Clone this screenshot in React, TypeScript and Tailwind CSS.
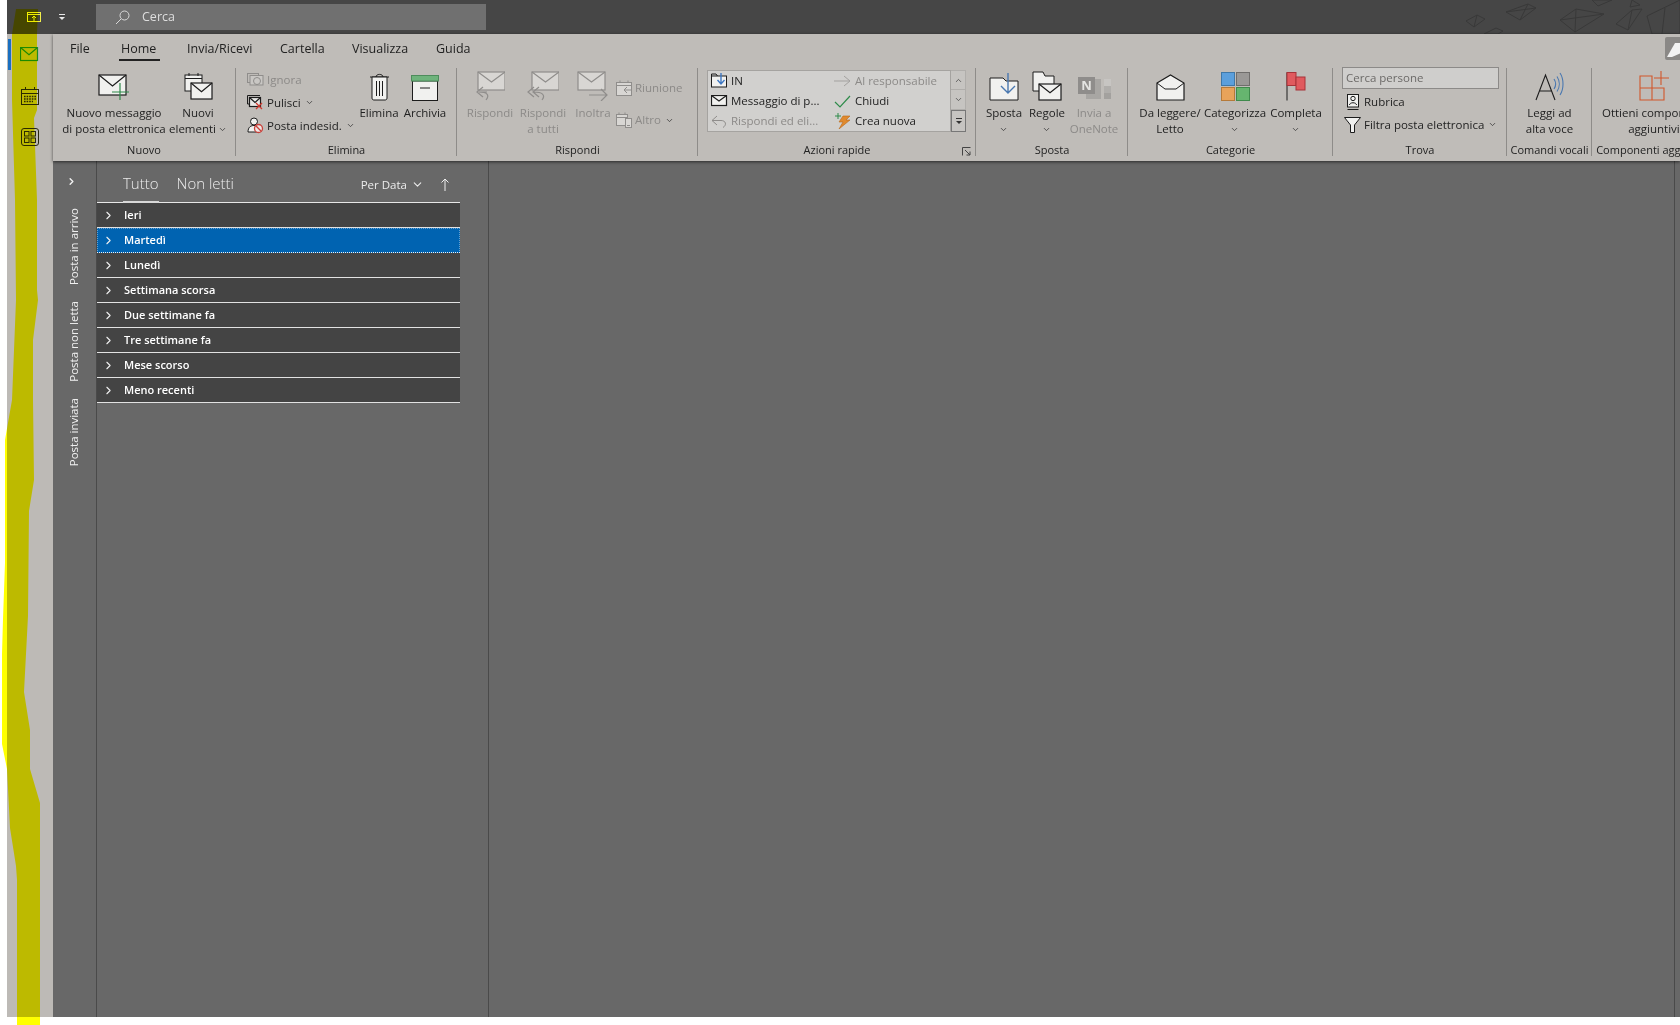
import type { ReactNode } from "react";
import { ChevronDown, ChevronRight, ChevronUp } from "lucide-react";

const INK = "#1c1c1c";
const OFF = "#8f8d8b";
const PAPER = "#f1f1ef";

function Env({ x, y, w, h, stroke = INK, fill = PAPER, sw = 1.2 }: { x: number; y: number; w: number; h: number; stroke?: string; fill?: string; sw?: number }) {
  return (
    <g fill={fill} stroke={stroke} strokeWidth={sw}>
      <rect x={x} y={y} width={w} height={h} />
      <path d={`M${x} ${y}L${x + w / 2} ${y + h * 0.55}L${x + w} ${y}`} fill="none" />
    </g>
  );
}

function Ico({ w, h, children, className = "" }: { w: number; h: number; children: ReactNode; className?: string }) {
  return (
    <svg width={w} height={h} viewBox={`0 0 ${w} ${h}`} className={`shrink-0 ${className}`}>
      {children}
    </svg>
  );
}

function Caret({ off = false }: { off?: boolean }) {
  return <ChevronDown size={9} strokeWidth={2} className="inline-block" color={off ? OFF : "#333"} />;
}

function Big({ w, icon, lines, caret, off, caretBelow }: { w: string; icon: ReactNode; lines: string[]; caret?: boolean; off?: boolean; caretBelow?: boolean }) {
  return (
    <div className={`flex shrink-0 flex-col items-center ${w}`}>
      <div className="flex h-[37px] items-end justify-center pb-[4px]">{icon}</div>
      <div className={`text-center leading-[16px] whitespace-nowrap ${off ? "text-[#8c8a88]" : "text-[#222]"}`}>
        {lines.map((l, i) => (
          <div key={i}>
            {l}
            {caret && i === lines.length - 1 && <span className="ml-[2px]"><Caret /></span>}
          </div>
        ))}
        {caretBelow && <div className="flex h-[16px] items-center justify-center"><Caret /></div>}
      </div>
    </div>
  );
}

function Small({ icon, label, caret, off, h = "h-[23px]", iw = "w-[20px]" }: { icon: ReactNode; label: string; caret?: boolean; off?: boolean; h?: string; iw?: string }) {
  return (
    <div className={`flex items-center whitespace-nowrap ${h} ${off ? "text-[#8c8a88]" : "text-[#222]"}`}>
      <div className={`flex shrink-0 items-center ${iw}`}>{icon}</div>
      <span>{label}</span>
      {caret && <span className="ml-[4px] flex"><Caret /></span>}
    </div>
  );
}

function Group({ w, label, pad = "", children, last }: { w: string; label: string; pad?: string; children: ReactNode; last?: boolean }) {
  return (
    <div className={`relative flex h-[88px] shrink-0 flex-col ${w} ${last ? "" : "border-r border-[#8e8c89] mr-px"}`}>
      <div className={`flex h-[76px] ${pad}`}>{children}</div>
      <div className="text-center text-[11px] leading-[12px] whitespace-nowrap text-[#222]">{label}</div>
    </div>
  );
}

const tabs = [
  { t: "File", w: "w-[51px]" },
  { t: "Home", w: "w-[66px]" },
  { t: "Invia/Ricevi", w: "w-[93px]" },
  { t: "Cartella", w: "w-[72px]" },
  { t: "Visualizza", w: "w-[84px]" },
  { t: "Guida", w: "w-[50px]" },
];

const folders = ["Ieri", "Martedì", "Lunedì", "Settimana scorsa", "Due settimane fa", "Tre settimane fa", "Mese scorso", "Meno recenti"];

function Planes() {
  const kites = [
    "M1466 21L1477 15L1485 19L1474 27Z M1477 15L1474 27",
    "M1506 12L1528 4L1536 8L1520 20Z M1528 4L1520 20 M1506 12L1536 8",
    "M1560 20L1576 9L1604 14L1575 32Z M1576 9L1575 32 M1560 20L1604 14",
    "M1616 24L1632 10L1642 9L1628 30Z M1632 10L1628 30",
    "M1647 16L1680 0L1680 34L1652 34Z M1665 8L1662 34",
    "M1592 0L1612 0L1598 6Z",
    "M1632 0L1640 5L1630 7Z",
    "M1484 34L1496 28L1503 31L1498 34Z",
  ];
  return (
    <svg width="1680" height="34" viewBox="0 0 1680 34" className="pointer-events-none absolute top-0 left-[-7px]">
      {kites.map((d, i) => (
        <path key={i} d={d} fill="none" stroke="#393939" strokeWidth="1" />
      ))}
    </svg>
  );
}

export default function App() {
  return (
    <div className="relative h-[1025px] w-[1680px] overflow-hidden bg-white pb-[8px] pl-[7px] font-['Open_Sans',sans-serif] text-[11.5px]">
      <div className="flex h-full flex-col">
        {/* title bar */}
        <div className="relative flex h-[34px] shrink-0 items-center bg-[#464646]">
          <Planes />
          <div className="flex w-[21px] justify-center ml-[16px]">
            <Ico w={14} h={12}>
              <rect x="0.5" y="1.5" width="13" height="9" fill="none" stroke="#f1ee4a" />
              <path d="M0.5 3.5H13.5 M7 10V5 M5 7L7 5L9 7" fill="none" stroke="#f1ee4a" />
            </Ico>
          </div>
          <div className="ml-[14px] flex w-[8px] justify-center">
            <Ico w={8} h={7}>
              <path d="M1 0.5H7" stroke="#e8e8e8" />
              <path d="M1 3L4 6L7 3Z" fill="#e8e8e8" />
            </Ico>
          </div>
          <div className="ml-[30px] flex h-[26px] w-[390px] items-center bg-[#707070] pl-[19px] text-[12.5px] text-[#dedede]">
            <Ico w={15} h={15}>
              <circle cx="9.5" cy="5.5" r="4.5" fill="none" stroke="#d8d8d8" />
              <path d="M6 9L1 14" stroke="#d8d8d8" />
            </Ico>
            <span className="ml-[12px]">Cerca</span>
          </div>
        </div>

        <div className="flex min-h-0 flex-1">
          {/* app rail */}
          <div className="relative w-[46px] shrink-0 bg-[#bdbab6]">
            <div className="absolute top-[5px] left-px h-[31px] w-[3px] bg-[#1a6fc0]" />
            <div className="flex flex-col items-center gap-[26px] pt-[13px] pr-[1px]">
              <Ico w={19} h={15}>
                <Env x={0.5} y={0.5} w={17} h={13} stroke="#1d8a2a" fill="none" />
              </Ico>
              <Ico w={18} h={18} className="-mt-[1px]">
                <rect x="0.5" y="2.5" width="17" height="15" fill="none" stroke="#2a2a10" />
                <path d="M0.5 6.5H17.5 M4.5 0V3 M13.5 0V3" stroke="#2a2a10" />
                <path d="M3 9.5H15 M3 12H15 M3 14.5H12" stroke="#2a2a10" strokeWidth="1.4" strokeDasharray="1.6 1" />
              </Ico>
              <Ico w={18} h={18} className="-mt-[3px]">
                <rect x="0.5" y="0.5" width="17" height="17" rx="2.5" fill="none" stroke="#2a2a10" />
                <rect x="3.5" y="3.5" width="4.5" height="4.5" fill="none" stroke="#2a2a10" />
                <rect x="10" y="3.5" width="4.5" height="4.5" fill="none" stroke="#2a2a10" />
                <rect x="3.5" y="10" width="4.5" height="4.5" fill="none" stroke="#2a2a10" />
                <rect x="10" y="10" width="4.5" height="4.5" fill="none" stroke="#2a2a10" />
              </Ico>
            </div>
          </div>

          <div className="flex min-w-0 flex-1 flex-col">
            {/* ribbon */}
            <div className="relative z-10 h-[127px] shrink-0 overflow-hidden bg-[#bfbcb8] shadow-[0_1px_3px_rgba(0,0,0,0.6)]">
              <div className="flex h-[34px] pl-[5px] text-[12.5px] text-[#222]">
                {tabs.map((tab) => (
                  <div key={tab.t} className={`relative flex h-[30px] items-center pl-[12px] ${tab.w} ${tab.t === "Home" ? "pl-[12px] font-medium" : ""}`}>
                    {tab.t}
                    {tab.t === "Home" && <div className="absolute right-[15px] bottom-[3px] left-[10px] h-[2px] bg-[#222]" />}
                  </div>
                ))}
              </div>
              <div className="absolute top-[3px] right-0 h-[23px] w-[15px] overflow-hidden rounded-l-[2px] bg-[#8a8886]">
                <Ico w={15} h={23}>
                  <path d="M2 20L10 6L16 6L16 16L7 20Z" fill="#f2f2f2" />
                </Ico>
              </div>

              <div className="flex">
                <Group w="w-[183px]" label="Nuovo" pad="pl-[6px] gap-px">
                  <Big
                    w="w-[110px]"
                    lines={["Nuovo messaggio", "di posta elettronica"]}
                    icon={
                      <Ico w={32} h={27}>
                        <Env x={1} y={1} w={27} h={20} />
                        <path d="M22 9V26 M14 18H31" stroke="#2f8a4a" strokeWidth="1.2" />
                      </Ico>
                    }
                  />
                  <Big
                    w="w-[56px]"
                    lines={["Nuovi", "elementi"]}
                    caret
                    icon={
                      <Ico w={29} h={29}>
                        <rect x="1" y="3" width="17" height="16" fill={PAPER} stroke={INK} />
                        <path d="M1 6.5H18 M5 1V4 M14 1V4" stroke={INK} />
                        <Env x={7} y={11} w={21} h={16} />
                      </Ico>
                    }
                  />
                </Group>

                <Group w="w-[220px]" label="Elimina" pad="pl-[10px]">
                  <div className="w-[110px] shrink-0">
                    <Small
                      off
                      label="Ignora"
                      icon={
                        <Ico w={17} h={13}>
                          <rect x="0.5" y="0.5" width="11" height="9" fill="none" stroke={OFF} />
                          <rect x="3" y="2.5" width="13" height="9.5" fill="#c9c7c4" stroke={OFF} />
                          <circle cx="10" cy="8" r="3.5" fill="none" stroke={OFF} />
                        </Ico>
                      }
                    />
                    <Small
                      label="Pulisci"
                      caret
                      icon={
                        <Ico w={17} h={15}>
                          <path d="M0.5 0.5H13 M0.5 0.5V9 H2" fill="none" stroke={INK} />
                          <Env x={2.5} y={2.5} w={11} h={9} fill="#e9e9e7" />
                          <path d="M9 8L15 14 M15 8L9 14" stroke="#d0392f" strokeWidth="1.3" />
                        </Ico>
                      }
                    />
                    <Small
                      label="Posta indesid."
                      caret
                      icon={
                        <Ico w={17} h={17}>
                          <circle cx="7" cy="4.5" r="3.5" fill={PAPER} stroke={INK} />
                          <path d="M1 15C1 10 4 8.5 7 8.5C10 8.5 12 10 12 15Z" fill={PAPER} stroke={INK} />
                          <circle cx="11.5" cy="11.5" r="4" fill="#efe7e5" stroke="#c8403a" strokeWidth="1.3" />
                          <path d="M8.8 8.8L14.2 14.2" stroke="#c8403a" strokeWidth="1.3" />
                        </Ico>
                      }
                    />
                  </div>
                  <Big
                    w="w-[44px]"
                    lines={["Elimina"]}
                    icon={
                      <Ico w={21} h={28}>
                        <path d="M1 4H20 M7 4C7 0.5 14 0.5 14 4" fill="none" stroke={INK} />
                        <path d="M3 4V25C3 26.5 4 27 5 27H16C17 27 18 26.5 18 25V4Z" fill={PAPER} stroke={INK} />
                        <path d="M7.5 8V23 M10.5 8V23 M13.5 8V23" stroke={INK} />
                      </Ico>
                    }
                  />
                  <Big
                    w="w-[48px]"
                    lines={["Archivia"]}
                    icon={
                      <Ico w={28} h={26}>
                        <rect x="1.5" y="6" width="25" height="19.5" fill={PAPER} stroke={INK} />
                        <rect x="0.5" y="0.5" width="27" height="5.5" fill="#6fb37c" stroke="#4e8c5c" />
                        <path d="M9 13H19" stroke={INK} />
                      </Ico>
                    }
                  />
                </Group>

                <Group w="w-[240px]" label="Rispondi" pad="pl-[7px]">
                  <Big
                    off
                    w="w-[50px] mr-[2px]"
                    lines={["Rispondi"]}
                    icon={
                      <Ico w={30} h={30}>
                        <Env x={3} y={1} w={27} h={18} stroke={OFF} fill="#d8d6d3" />
                        <path d="M12 21H4 M8 16L2 21L8 26 M4 21C12 21 15 24 11 29" fill="none" stroke={OFF} strokeWidth="1.2" />
                      </Ico>
                    }
                  />
                  <Big
                    off
                    w="w-[52px] mr-px"
                    lines={["Rispondi", "a tutti"]}
                    icon={
                      <Ico w={32} h={30}>
                        <Env x={5} y={1} w={27} h={18} stroke={OFF} fill="#d8d6d3" />
                        <path d="M7 16L1 21L7 26 M12 16L6 21L12 26 M7 21C15 21 19 24 15 29" fill="none" stroke={OFF} strokeWidth="1.2" />
                      </Ico>
                    }
                  />
                  <Big
                    off
                    w="w-[46px]"
                    lines={["Inoltra"]}
                    icon={
                      <Ico w={32} h={30}>
                        <Env x={1} y={1} w={27} h={18} stroke={OFF} fill="#d8d6d3" />
                        <path d="M12 24H30 M24 18L30 24L24 30" fill="none" stroke={OFF} strokeWidth="1.2" />
                      </Ico>
                    }
                  />
                  <div className="flex flex-col gap-[10px] pt-[9px]">
                    <Small
                      off
                      h="h-[22px]"
                      iw="w-[19px]"
                      label="Riunione"
                      icon={
                        <Ico w={17} h={16}>
                          <rect x="0.5" y="2.5" width="15" height="13" fill="#d8d6d3" stroke={OFF} />
                          <path d="M0.5 5.5H15.5 M4 0.5V3 M12 0.5V3 M16 10H8 M11 7L8 10L11 13" fill="none" stroke={OFF} />
                        </Ico>
                      }
                    />
                    <Small
                      off
                      caret
                      h="h-[22px]"
                      iw="w-[19px]"
                      label="Altro"
                      icon={
                        <Ico w={17} h={16}>
                          <rect x="0.5" y="2.5" width="11" height="11" fill="#d8d6d3" stroke={OFF} />
                          <path d="M0.5 5.5H11.5 M3 0.5V3 M9 0.5V3" stroke={OFF} />
                          <rect x="9.5" y="6.5" width="6" height="9" fill="#d8d6d3" stroke={OFF} />
                          <path d="M11 13.5H14" stroke={OFF} />
                        </Ico>
                      }
                    />
                  </div>
                </Group>

                <Group w="w-[277px]" label="Azioni rapide" pad="pl-[8px]">
                  <div className="mt-[2px] flex h-[62px]">
                    <div className="grid h-[62px] w-[244px] grid-cols-[123px_1fr] grid-rows-3 border border-[#a5a3a0] bg-[#d1d0ce] pl-[3px] leading-[20px]">
                      <Small
                        h="h-[20px]"
                        label="IN"
                        icon={
                          <Ico w={17} h={16}>
                            <rect x="0.5" y="3" width="15" height="11" fill={PAPER} stroke={INK} />
                            <path d="M0.5 3V1H5L6.5 3" fill="none" stroke={INK} />
                            <path d="M10 0V10 M6.5 7L10 11L13.5 7" fill="none" stroke="#3f78c2" strokeWidth="1.4" />
                          </Ico>
                        }
                      />
                      <Small
                        off
                        h="h-[20px]"
                        iw="w-[21px]"
                        label="Al responsabile"
                        icon={
                          <Ico w={17} h={12}>
                            <path d="M0 6H16 M10 1L16 6L10 11" fill="none" stroke="#a3a19f" />
                          </Ico>
                        }
                      />
                      <Small
                        h="h-[20px]"
                        label="Messaggio di p..."
                        icon={
                          <Ico w={17} h={12}>
                            <Env x={0.5} y={0.5} w={15} h={10} />
                          </Ico>
                        }
                      />
                      <Small
                        h="h-[20px]"
                        iw="w-[21px]"
                        label="Chiudi"
                        icon={
                          <Ico w={17} h={13}>
                            <path d="M1 7L6 12L16 1" fill="none" stroke="#2e8b4a" strokeWidth="1.2" />
                          </Ico>
                        }
                      />
                      <Small
                        off
                        h="h-[20px]"
                        label="Rispondi ed eli..."
                        icon={
                          <Ico w={17} h={13}>
                            <path d="M6 1L1 5.5L6 10 M1 5.5H10C15 5.5 16 10 12 12.5" fill="none" stroke={OFF} />
                          </Ico>
                        }
                      />
                      <Small
                        h="h-[20px]"
                        iw="w-[21px]"
                        label="Crea nuova"
                        icon={
                          <Ico w={18} h={16}>
                            <path d="M9 3H16L12 7H16L5 16L9 9H5Z" fill="#e08a2e" stroke="#b96a1c" strokeWidth="0.6" />
                            <path d="M4 0V6 M1 3H7" stroke="#2e8b4a" />
                          </Ico>
                        }
                      />
                    </div>
                    <div className="flex w-[15px] flex-col">
                      <div className="flex h-[20px] items-center justify-center border border-l-0 border-[#b0aeab] bg-[#c6c4c1]">
                        <ChevronUp size={9} color="#444" />
                      </div>
                      <div className="flex h-[20px] items-center justify-center border border-t-0 border-l-0 border-[#b0aeab] bg-[#c6c4c1]">
                        <ChevronDown size={9} color="#444" />
                      </div>
                      <div className="flex h-[22px] items-center justify-center border border-[#777] bg-[#c6c4c1]">
                        <Ico w={8} h={7}>
                          <path d="M1 0.5H7" stroke="#333" />
                          <path d="M1 3L4 6L7 3Z" fill="#333" />
                        </Ico>
                      </div>
                    </div>
                  </div>
                  <div className="absolute top-[79px] left-[263px] flex">
                    <Ico w={9} h={9}>
                      <path d="M0.5 8.5V0.5H8.5" fill="none" stroke="#444" />
                      <path d="M3 3L8 8 M8 4.5V8H4.5" fill="none" stroke="#444" />
                    </Ico>
                  </div>
                </Group>

                <Group w="w-[151px]" label="Sposta" pad="pl-[5px]">
                  <Big
                    w="w-[44px]"
                    lines={["Sposta"]}
                    caretBelow
                    icon={
                      <Ico w={30} h={28}>
                        <path d="M1 8V27H29V8H17L14 5H1Z" fill={PAPER} stroke={INK} />
                        <path d="M19 0V20 M12 13L19 20L26 13" fill="none" stroke="#4a78b0" strokeWidth="1.4" />
                      </Ico>
                    }
                  />
                  <Big
                    w="w-[42px] mr-px"
                    lines={["Regole"]}
                    caretBelow
                    icon={
                      <Ico w={30} h={30}>
                        <path d="M1 5V20H22V5H13L11 1H1Z" fill={PAPER} stroke={INK} />
                        <Env x={7} y={13} w={22} h={16} />
                      </Ico>
                    }
                  />
                  <Big
                    off
                    w="w-[50px]"
                    lines={["Invia a", "OneNote"]}
                    icon={
                      <Ico w={34} h={24} className="mb-[1px]">
                        <rect x="9" y="3" width="15" height="20" fill="#a8a6a3" />
                        <rect x="1" y="1" width="17" height="17" fill="#8f8d8b" />
                        <text x="9.5" y="14" textAnchor="middle" fontSize="13" fontWeight="700" fill="#e4e4e2" fontFamily="'Open Sans',sans-serif">N</text>
                        <rect x="27" y="3" width="7" height="7" fill="#c7c5c2" />
                        <rect x="27" y="10" width="7" height="7" fill="#b0aeab" />
                        <rect x="27" y="17" width="7" height="6" fill="#a3a19e" />
                      </Ico>
                    }
                  />
                </Group>

                <Group w="w-[204px]" label="Categorie" pad="pl-[8px]">
                  <Big
                    w="w-[66px]"
                    lines={["Da leggere/", "Letto"]}
                    icon={
                      <Ico w={29} h={27}>
                        <path d="M1 9L14.5 1L28 9V26H1Z" fill={PAPER} stroke={INK} strokeWidth="1.2" />
                        <path d="M1 9L9 15H20L28 9" fill="none" stroke={INK} />
                      </Ico>
                    }
                  />
                  <Big
                    w="w-[64px]"
                    lines={["Categorizza"]}
                    caretBelow
                    icon={
                      <Ico w={29} h={29}>
                        <rect x="0.5" y="0.5" width="13" height="13" fill="#5b9fdc" stroke="#3f78a8" />
                        <rect x="15.5" y="0.5" width="13" height="13" fill="#9a9896" stroke="#6f6d6b" />
                        <rect x="0.5" y="15.5" width="13" height="13" fill="#e8a35a" stroke="#b57a3a" />
                        <rect x="15.5" y="15.5" width="13" height="13" fill="#66b56f" stroke="#3f8a4c" />
                      </Ico>
                    }
                  />
                  <Big
                    w="w-[58px]"
                    lines={["Completa"]}
                    caretBelow
                    icon={
                      <Ico w={20} h={29}>
                        <path d="M1 0.5V28.5" stroke={INK} />
                        <rect x="1" y="0.5" width="9" height="13" fill="#e05a5e" stroke="#a83338" />
                        <rect x="10" y="5" width="9" height="13" fill="#e05a5e" stroke="#a83338" />
                      </Ico>
                    }
                  />
                </Group>

                <Group w="w-[173px]" label="Trova" pad="pl-[8px]">
                  <div className="flex flex-col">
                    <div className="-mt-px flex h-[22px] w-[157px] items-center border border-[#8c8a88] bg-[#cfcecc] pl-[3px] text-[#6c6a68]">
                      Cerca persone
                    </div>
                    <div className="mt-[1px] pl-[5px]">
                      <Small
                        iw="w-[17px]"
                        label="Rubrica"
                        icon={
                          <Ico w={12} h={16}>
                            <rect x="0.5" y="0.5" width="11" height="12.5" fill={PAPER} stroke={INK} />
                            <circle cx="6" cy="4.5" r="2.2" fill="none" stroke={INK} />
                            <path d="M2.5 11C2.5 8 9.5 8 9.5 11 M0.5 15.5H11.5" fill="none" stroke={INK} />
                          </Ico>
                        }
                      />
                      <div className="-ml-[3px]">
                        <Small
                          iw="w-[20px]"
                          label="Filtra posta elettronica"
                          caret
                          icon={
                            <Ico w={17} h={16}>
                              <path d="M0.5 0.5H16.5L10.5 8V15.5H6.5V8Z" fill={PAPER} stroke={INK} />
                            </Ico>
                          }
                        />
                      </div>
                    </div>
                  </div>
                </Group>

                <Group w="w-[84px]" label="Comandi vocali">
                  <Big
                    w="w-[83px]"
                    lines={["Leggi ad", "alta voce"]}
                    icon={
                      <Ico w={30} h={30}>
                        <path d="M1 29L10.5 4L20 29 M4.5 20H16.5" fill="none" stroke={INK} strokeWidth="1.1" />
                        <path d="M19 8C21 11 21 15 19 18 M22 5.5C25 10 25 16 22 20.5 M25 2C29 8 29 18 25 24" fill="none" stroke="#4a78b0" strokeWidth="1.1" />
                      </Ico>
                    }
                  />
                </Group>

                <Group w="w-[122px]" label="Componenti aggiuntivi" last>
                  <Big
                    w="w-[122px]"
                    lines={["Ottieni componenti", "aggiuntivi"]}
                    icon={
                      <Ico w={31} h={31}>
                        <path d="M1 6H13V18H1Z M1 18H13V30H1Z M13 18H25V30H13Z" fill="none" stroke="#d2562a" strokeWidth="1.1" />
                        <path d="M22 1V15 M15 8H30" stroke="#d2562a" strokeWidth="1.1" />
                      </Ico>
                    }
                  />
                </Group>
              </div>
            </div>

            {/* lower panes */}
            <div className="flex min-h-0 flex-1 bg-[#686868]">
              <div className="relative w-[44px] shrink-0 border-r border-[#4a4a4a]">
                <div className="flex justify-center pt-[15px] pr-[6px]">
                  <ChevronRight size={11} strokeWidth={3} color="#f2f2f2" />
                </div>
                <div className="mt-[21px] flex flex-col items-center gap-[16px] pr-[1px] text-[11.5px] leading-[16px] font-medium text-[#f0f0f0]">
                  <div className="rotate-180 whitespace-nowrap [writing-mode:vertical-rl]">Posta in arrivo</div>
                  <div className="rotate-180 whitespace-nowrap [writing-mode:vertical-rl]">Posta non letta</div>
                  <div className="rotate-180 whitespace-nowrap [writing-mode:vertical-rl]">Posta inviata</div>
                </div>
              </div>

              <div className="w-[392px] shrink-0 border-r border-[#4a4a4a]">
                <div className="w-[363px] pt-[4px]">
                  <div className="flex h-[38px] items-center border-b border-[#e8e8e8] pl-[26px] text-[#ececec]">
                    <div className="relative flex h-full items-center text-[15px] font-light">
                      Tutto
                      <div className="absolute right-0 bottom-[-1px] left-0 h-[2px] bg-[#d8d8d8]" />
                    </div>
                    <div className="ml-[18px] text-[15px] font-light">Non letti</div>
                    <div className="ml-auto flex items-center pr-[10px] pt-[2px] text-[11.5px]">
                      Per Data
                      <ChevronDown size={13} className="ml-[4px]" />
                      <Ico w={10} h={13} className="ml-[16px]">
                        <path d="M5 13V1 M1.5 4.5L5 1L8.5 4.5" fill="none" stroke="#efefef" />
                      </Ico>
                    </div>
                  </div>
                  {folders.map((f) => (
                    <div
                      key={f}
                      className={`flex h-[25px] items-center border-b font-bold text-white ${
                        f === "Martedì" ? "border-dotted border-[#e8e8e8] bg-[#0063b1] outline-1 -outline-offset-1 outline-white/40 outline-dotted" : "border-[#e2e2e2] bg-[#444444]"
                      }`}
                    >
                      <ChevronRight size={13} strokeWidth={2} className="ml-[5px]" color="#f0f0f0" />
                      <span className="ml-[9px] text-[11px] font-semibold">{f}</span>
                    </div>
                  ))}
                </div>
              </div>

              <div className="min-w-0 flex-1 border-r border-[#4a4a4a] mr-[5px]" />
            </div>
          </div>
        </div>
      </div>

      {/* hand-drawn yellow highlighter stroke on top of the screenshot */}
      <svg width="60" height="1025" viewBox="0 0 60 1025" className="pointer-events-none absolute top-0 left-0 z-20 mix-blend-multiply">
        <path
          d="M16 9L38 9L37 34L37 110L34 118L37 200L37 290L38 300L33 340L33 400L34 480L29 511L28 616L24 692L30 730L30 769L40 803L40 1025L17 1025L17 880L16 866L10 828L7 769L2 744L2 654L3 619L5 563L5 480L5 440L12 400L16 300L15 200L12 100L12 34Z"
          fill="#ffff00"
        />
      </svg>
    </div>
  );
}
